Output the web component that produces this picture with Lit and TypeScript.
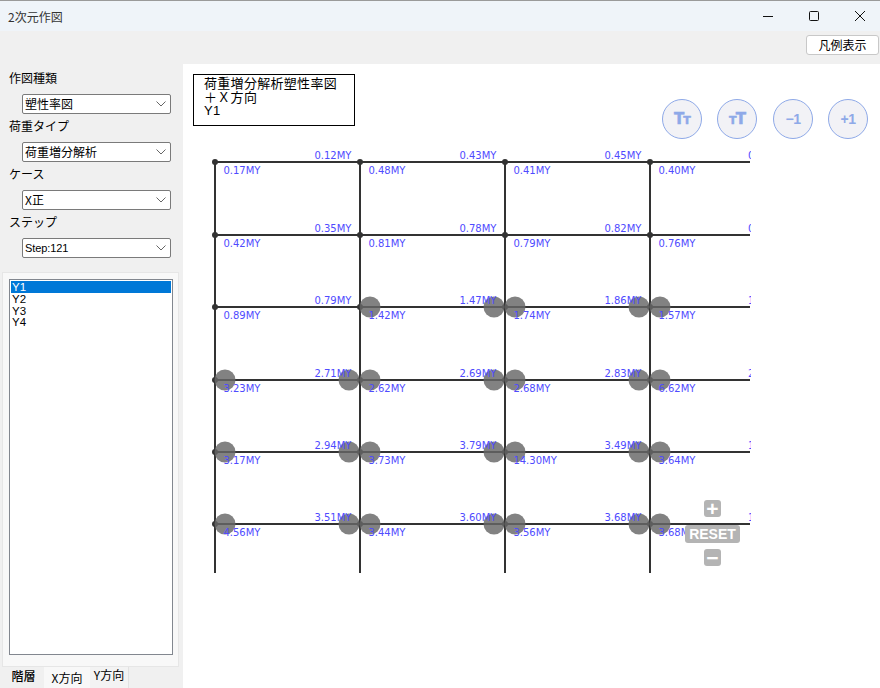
import { LitElement, html, css, svg } from "lit";
import { customElement } from "lit/decorators.js";

const XS = [215, 360, 505, 650];
const YS = [162, 235, 307, 380, 452, 524];
const TOP = [
  ["0.12", "0.43", "0.45", "0"],
  ["0.35", "0.78", "0.82", "0"],
  ["0.79", "1.47", "1.86", "1"],
  ["2.71", "2.69", "2.83", "2"],
  ["2.94", "3.79", "3.49", "1"],
  ["3.51", "3.60", "3.68", "1"],
];
const BOT = [
  ["0.17", "0.48", "0.41", "0.40"],
  ["0.42", "0.81", "0.79", "0.76"],
  ["0.89", "1.42", "1.74", "1.57"],
  ["3.23", "2.62", "2.68", "6.62"],
  ["3.17", "3.73", "14.30", "3.64"],
  ["4.56", "3.44", "3.56", "3.68"],
];

@customElement("app-root")
export class AppRoot extends LitElement {
  static styles = css`
    :host { display: flex; flex-direction: column; width: 880px; height: 688px; overflow: hidden; background: #f0f0f0; font-family: "Noto Sans CJK JP", "Liberation Sans", sans-serif; font-size: 12px; color: #000; }
    .title { height: 31px; flex: none; box-sizing: border-box; background: #eff4f9; border-top: 1px solid #9a9a9a; display: flex; align-items: center; padding-left: 8px; color: #333; font-size: 12px; }
    .title span { flex: 1; }
    .wc { width: 46px; height: 30px; display: flex; align-items: center; justify-content: center; }
    .wc:last-child { margin-right: -3px; }
    .toolbar { height: 33px; flex: none; display: flex; justify-content: flex-end; align-items: flex-start; padding: 4px 1px 0 0; box-sizing: border-box; }
    .legend-btn { width: 73px; height: 20px; box-sizing: border-box; background: #fff; border: 1px solid #c8c8c8; border-radius: 3px; display: flex; align-items: center; justify-content: center; line-height: 1; }
    .body { flex: 1; display: flex; min-height: 0; }
    .side { width: 183px; flex: none; display: flex; flex-direction: column; padding-top: 5px; box-sizing: border-box; }
    .lab { height: 24px; line-height: 16px; padding: 0 0 0 9px; }
    .lab.tall { height: 25px; line-height: 17px; }
    .sel { margin-left: 22px; width: 149px; height: 20px; box-sizing: border-box; background: #fff; border: 1px solid #7a7a7a; border-radius: 2px; display: flex; align-items: center; justify-content: space-between; padding: 0 3px 0 2px; margin-bottom: 4px; line-height: 1; }
    .sel.latin { font-family: "Liberation Sans", sans-serif; font-size: 11px; letter-spacing: -.1px; }
    .group { margin: 10px 4px 0 2px; height: 395px; box-sizing: border-box; background: #f8f8f8; border: 1px solid #e6e6e6; padding: 6px 5px 0 6px; }
    .list { height: 376px; box-sizing: border-box; background: #fff; border: 1px solid #82878f; padding: 1px; font-family: "Liberation Sans", sans-serif; font-size: 11.5px; line-height: 12px; }
    .list div { padding-left: 1px; height: 11.7px; }
    .list .on { background: #0078d7; color: #fff; height: 12px; }
    .tabs { display: flex; height: 21px; padding-left: 3px; }
    .tab { display: flex; align-items: flex-start; justify-content: center; box-sizing: border-box; line-height: 14px; }
    .t1 { width: 41px; font-size: 12px; padding-top: 2px; font-weight: 500; }
    .t2 { width: 46px; background: #f8f8f8; padding-top: 4px; }
    .t3 { width: 39px; padding-top: 1px; background: #f3f3f3; border-right: 1px solid #e2e2e2; }
    .main { flex: 1; position: relative; background: #fff; }
    .main > svg { display: block; }
    .note { position: absolute; left: 10px; top: 10px; width: 162px; height: 52px; box-sizing: border-box; border: 1.5px solid #000; background: #fff; padding: 1px 0 0 10px; font-size: 13px; line-height: 13.5px; letter-spacing: .3px; white-space: pre; }
    .note .y { font-family: "Liberation Sans", sans-serif; }
    .round { position: absolute; top: 35px; width: 40px; height: 40px; box-sizing: border-box; border-radius: 50%; background: #f2f2f6; border: 1.3px solid #8ea9e8; color: #8ea9e8; font: bold 14px "Liberation Sans", sans-serif; letter-spacing: -.6px; display: flex; align-items: center; justify-content: center; }
    .round.tt { font: bold 15px "DejaVu Sans", sans-serif; letter-spacing: -.8px; -webkit-text-stroke: .5px #8ea9e8; }
    .round small { font-size: 11px; }
    .zb { position: absolute; background: #b4b4b4; color: #fff; border-radius: 3px; font: bold 14px "Liberation Sans", sans-serif; display: flex; align-items: center; justify-content: center; line-height: 1; }
    .plus, .minus { left: 521px; width: 17px; height: 17px; font-size: 21px; }
    .plus { top: 436px; }
    .minus { top: 485px; }
    .reset { left: 502px; top: 461px; width: 55px; height: 18px; }
    text { font-family: "DejaVu Sans", sans-serif; font-size: 10px; fill: #4f4bff; }
  `;

  private chevron() {
    return html`<svg width="12" height="8" viewBox="0 0 12 8"><path d="M1.5 1.5 6 6l4.5-4.5" fill="none" stroke="#666" stroke-width="1"/></svg>`;
  }

  private frame() {
    const circles: [number, number][] = [];
    YS.forEach((y, r) => {
      if (r < 2) return;
      XS.forEach((x, c) => {
        if (r > 2 || c > 0) circles.push([x + 10, y]);
        if (c > 0 && (r > 2 || c > 1)) circles.push([x - 11, y]);
      });
    });
    return svg`
      <defs><clipPath id="c"><rect x="183" y="64" width="568" height="624"/></clipPath></defs>
      <g clip-path="url(#c)">
        ${YS.map((y) => svg`<line x1="215" x2="750" y1=${y} y2=${y} stroke="#333" stroke-width="2"/>`)}
        ${XS.map((x) => svg`<line x1=${x} x2=${x} y1="162" y2="573" stroke="#333" stroke-width="2"/>`)}
        ${YS.flatMap((y) => XS.map((x) => svg`<circle cx=${x} cy=${y} r="3" fill="#333"/>`))}
        ${circles.map(([x, y]) => svg`<circle cx=${x} cy=${y} r="10.5" fill="#666" fill-opacity=".82"/>`)}
        ${YS.flatMap((y, r) => TOP[r].map((v, c) =>
          c < 3
            ? svg`<text x=${XS[c + 1] - 8.6} y=${y - 3.5} text-anchor="end">${v}MY</text>`
            : svg`<text x="748" y=${y - 3.5}>${v}</text>`))}
        ${YS.flatMap((y, r) => BOT[r].map((v, c) =>
          svg`<text x=${XS[c] + 8.4} y=${y + 11.6}>${v}MY</text>`))}
      </g>`;
  }

  render() {
    return html`
      <div class="title">
        <span>2次元作図</span>
        <div class="wc"><svg width="12" height="12" viewBox="0 0 12 12"><path d="M1 6.5h10" stroke="#111" fill="none"/></svg></div>
        <div class="wc"><svg width="12" height="12" viewBox="0 0 12 12"><rect x="1.5" y="1.5" width="9" height="9" rx="1" stroke="#111" fill="none"/></svg></div>
        <div class="wc"><svg width="12" height="12" viewBox="0 0 12 12"><path d="M1 1l10 10M11 1 1 11" stroke="#111" fill="none"/></svg></div>
      </div>
      <div class="toolbar"><div class="legend-btn">凡例表示</div></div>
      <div class="body">
        <div class="side">
          <div class="lab tall">作図種類</div>
          <div class="sel"><span>塑性率図</span>${this.chevron()}</div>
          <div class="lab">荷重タイプ</div>
          <div class="sel"><span>荷重増分解析</span>${this.chevron()}</div>
          <div class="lab">ケース</div>
          <div class="sel"><span>X正</span>${this.chevron()}</div>
          <div class="lab">ステップ</div>
          <div class="sel latin"><span>Step:121</span>${this.chevron()}</div>
          <div class="group">
            <div class="list">
              <div class="on">Y1</div><div>Y2</div><div>Y3</div><div>Y4</div>
            </div>
          </div>
          <div class="tabs">
            <div class="tab t1">階層</div>
            <div class="tab t2">X方向</div>
            <div class="tab t3">Y方向</div>
          </div>
        </div>
        <div class="main">
          <svg width="697" height="624" viewBox="183 64 697 624">${this.frame()}</svg>
          <div class="note">荷重増分解析塑性率図
＋Ｘ方向
<span class="y">Y1</span></div>
          <div class="round tt" style="left:479px"><span>T<small>T</small></span></div>
          <div class="round tt" style="left:534px"><span><small>T</small>T</span></div>
          <div class="round" style="left:590px">−1</div>
          <div class="round" style="left:645px">+1</div>
          <div class="zb plus">+</div>
          <div class="zb reset">RESET</div>
          <div class="zb minus">−</div>
        </div>
      </div>
    `;
  }
}
